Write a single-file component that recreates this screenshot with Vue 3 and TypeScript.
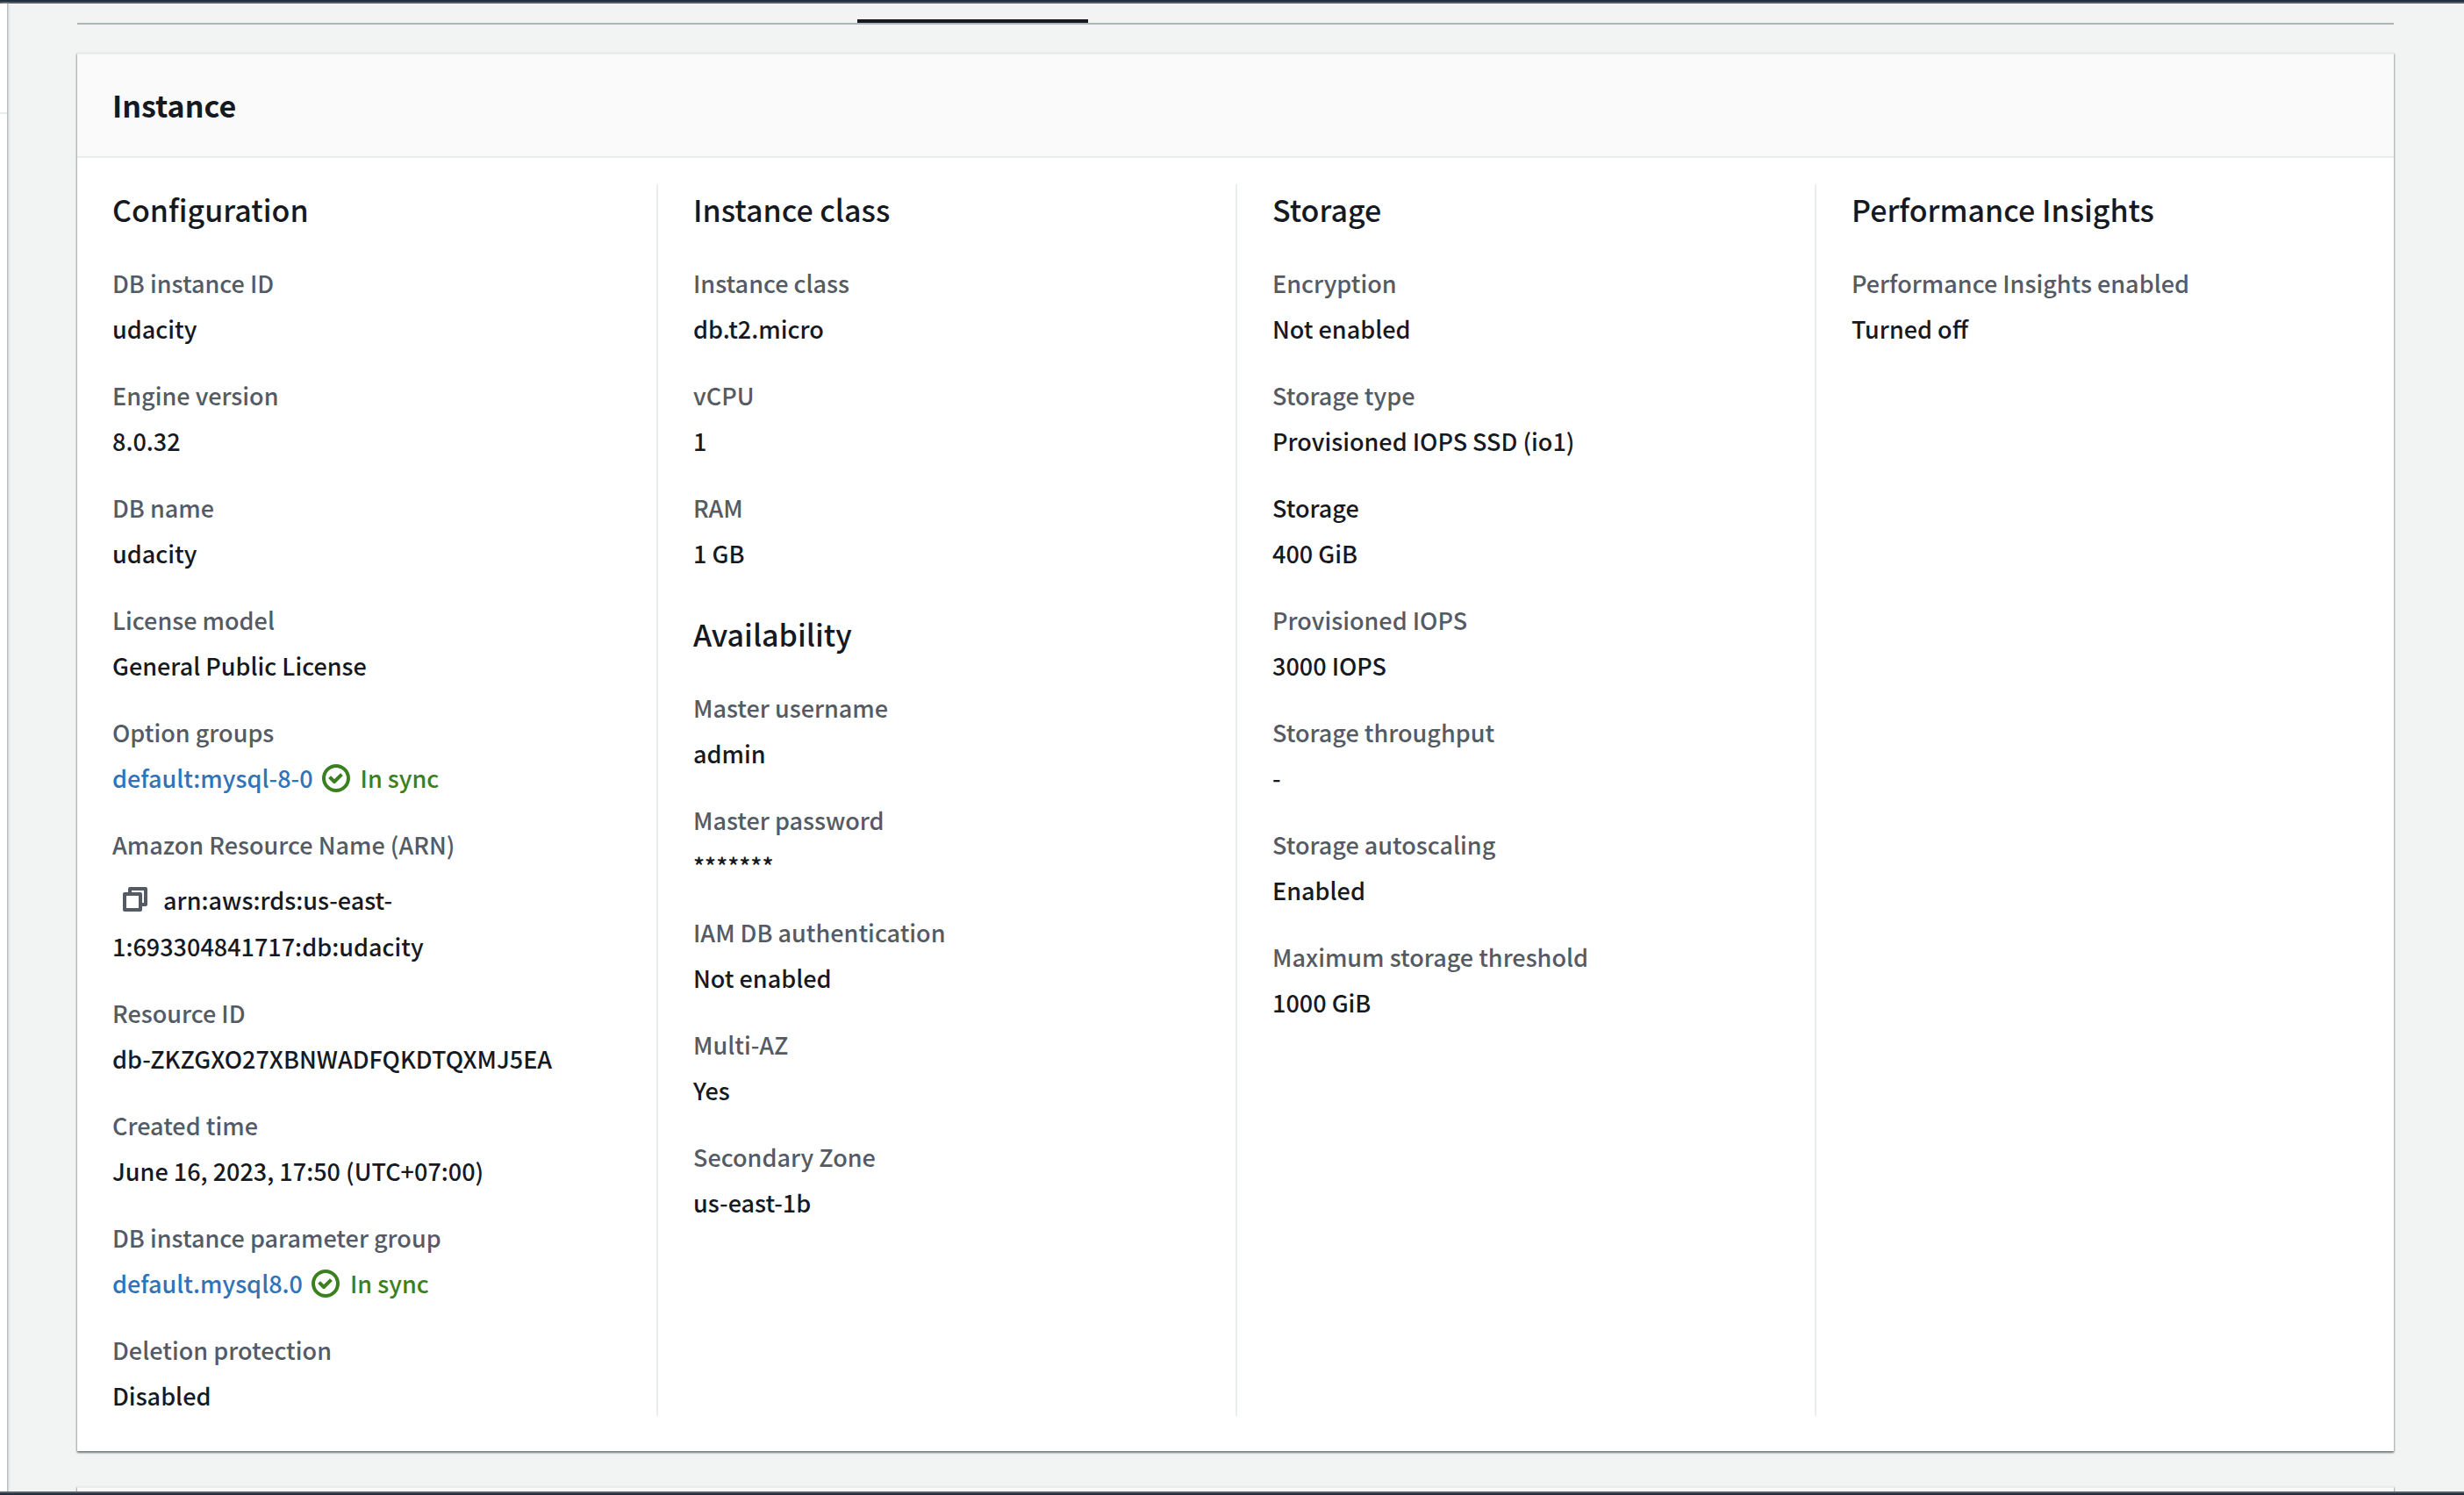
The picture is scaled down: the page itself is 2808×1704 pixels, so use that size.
<script setup lang="ts">
interface Field {
  label: string
  value: string
  kind?: 'link' | 'copy'
  strong?: boolean
}

interface Group {
  title: string
  fields: Field[]
}

const columns: Group[][] = [
  [
    {
      title: 'Configuration',
      fields: [
        { label: 'DB instance ID', value: 'udacity' },
        { label: 'Engine version', value: '8.0.32' },
        { label: 'DB name', value: 'udacity' },
        { label: 'License model', value: 'General Public License' },
        { label: 'Option groups', value: 'default:mysql-8-0', kind: 'link' },
        { label: 'Amazon Resource Name (ARN)', value: 'arn:aws:rds:us-east-1:693304841717:db:udacity', kind: 'copy' },
        { label: 'Resource ID', value: 'db-ZKZGXO27XBNWADFQKDTQXMJ5EA' },
        { label: 'Created time', value: 'June 16, 2023, 17:50 (UTC+07:00)' },
        { label: 'DB instance parameter group', value: 'default.mysql8.0', kind: 'link' },
        { label: 'Deletion protection', value: 'Disabled' },
      ],
    },
  ],
  [
    {
      title: 'Instance class',
      fields: [
        { label: 'Instance class', value: 'db.t2.micro' },
        { label: 'vCPU', value: '1' },
        { label: 'RAM', value: '1 GB' },
      ],
    },
    {
      title: 'Availability',
      fields: [
        { label: 'Master username', value: 'admin' },
        { label: 'Master password', value: '*******' },
        { label: 'IAM DB authentication', value: 'Not enabled' },
        { label: 'Multi-AZ', value: 'Yes' },
        { label: 'Secondary Zone', value: 'us-east-1b' },
      ],
    },
  ],
  [
    {
      title: 'Storage',
      fields: [
        { label: 'Encryption', value: 'Not enabled' },
        { label: 'Storage type', value: 'Provisioned IOPS SSD (io1)' },
        { label: 'Storage', value: '400 GiB', strong: true },
        { label: 'Provisioned IOPS', value: '3000 IOPS' },
        { label: 'Storage throughput', value: '-' },
        { label: 'Storage autoscaling', value: 'Enabled' },
        { label: 'Maximum storage threshold', value: '1000 GiB' },
      ],
    },
  ],
  [
    {
      title: 'Performance Insights',
      fields: [{ label: 'Performance Insights enabled', value: 'Turned off' }],
    },
  ],
]

function copy(text: string): void {
  void navigator.clipboard?.writeText(text)
}
</script>

<template>
  <div class="app">
    <div class="topbar"></div>
    <div class="body">
      <aside class="sidebar"><div class="sidebar-rule"></div></aside>
      <main class="content">
        <div class="tabs"><div class="tab-active"></div></div>

        <section class="card">
          <header class="card-header"><h2>Instance</h2></header>
          <div class="columns">
            <div v-for="(groups, i) in columns" :key="i" class="column">
              <section v-for="group in groups" :key="group.title" class="group">
                <h3>{{ group.title }}</h3>
                <dl>
                  <div v-for="field in group.fields" :key="field.label" class="field">
                    <dt :class="{ strong: field.strong }">{{ field.label }}</dt>
                    <dd v-if="field.kind === 'link'" class="linked">
                      <a href="#">{{ field.value }}</a>
                      <span class="status">
                        <svg class="icon" viewBox="0 0 16 16" aria-hidden="true">
                          <circle cx="8" cy="8" r="7" />
                          <path d="m5 8 2 2 3.521-3.521" stroke-linecap="square" />
                        </svg>
                        In sync
                      </span>
                    </dd>
                    <dd v-else-if="field.kind === 'copy'" class="arn">
                      <button type="button" aria-label="Copy ARN" @click="copy(field.value)">
                        <svg class="icon" viewBox="0 0 16 16" aria-hidden="true">
                          <path d="M2 5h9v9H2z" />
                          <path d="M5 5V2h9v9h-3" />
                        </svg>
                      </button>
                      {{ field.value }}
                    </dd>
                    <dd v-else>{{ field.value }}</dd>
                  </div>
                </dl>
              </section>
            </div>
          </div>
        </section>

        <section class="card next"></section>
      </main>
    </div>
    <div class="bottombar"></div>
  </div>
</template>

<style>
body {
  margin: 0;
  background: #f2f3f3;
}
</style>

<style scoped>
.app {
  display: flex;
  flex-direction: column;
  min-height: 100vh;
  box-sizing: border-box;
  background: #f2f3f3;
  color: #16191f;
  font-family: "Noto Sans CJK SC", "Noto Sans", sans-serif;
  font-size: 27px;
  font-weight: 500;
  line-height: 44px;
}

.topbar,
.bottombar {
  height: 2px;
  background: #232f3e;
}

.topbar {
  border-bottom: 2px solid #545b64;
}

.bottombar {
  border-top: 2px solid #545b64;
}

.body {
  display: flex;
  flex: 1;
}

.sidebar {
  flex: none;
  width: 8px;
  background: #fff;
  box-shadow: 1px 0 0 #b8c0c4, 2px 0 2px #c6cdd0;
}

.sidebar-rule {
  height: 2px;
  margin-top: 124px;
  background: #eaeded;
}

.content {
  display: flex;
  flex: 1;
  flex-direction: column;
  min-width: 0;
  margin: 0 80px;
}

.tabs {
  padding-top: 18px;
  margin-bottom: 32px;
  border-bottom: 2px solid #aab7b8;
}

.tab-active {
  width: 263px;
  height: 4px;
  margin-left: 889px;
  background: #16191f;
}

.card {
  background: #fff;
  border-top: 2px solid #eaeded;
  box-shadow: 0 2px 2px rgba(0, 28, 36, 0.4), 1px 1px 2px rgba(0, 28, 36, 0.2), -1px 1px 2px rgba(0, 28, 36, 0.2);
}

.next {
  flex: 1;
  min-height: 4px;
  margin-top: 40px;
  background: #fafafa;
}

.card-header {
  padding: 36px 40px;
  background: #fafafa;
  border-bottom: 2px solid #eaeded;
}

h2,
h3 {
  margin: 0;
  font-size: 34px;
  line-height: 44px;
}

h2 {
  font-weight: 700;
}

h3 {
  margin-bottom: 40px;
  font-weight: 500;
}

.columns {
  display: grid;
  grid-template-columns: repeat(4, 1fr);
  padding: 30px 0 40px;
}

.column {
  min-width: 0;
  padding: 7px 40px 1px;
}

.column + .column {
  border-left: 2px solid #eaeded;
}

.group + .group {
  margin-top: 48px;
}

dl {
  display: flex;
  flex-direction: column;
  gap: 32px;
  margin: 0;
}

dt {
  margin-bottom: 8px;
  color: #545b64;
}

dt.strong {
  color: #16191f;
}

dd {
  margin: 0;
}

a {
  color: #3073b8;
  text-decoration: none;
}

.linked,
.status {
  display: flex;
  align-items: center;
}

.linked {
  gap: 10px;
}

.status {
  gap: 12px;
  color: #3b8020;
}

.icon {
  display: block;
  flex: none;
  width: 32px;
  height: 32px;
  fill: none;
  stroke: currentColor;
  stroke-width: 2;
  stroke-linejoin: round;
}

.arn button {
  display: inline-flex;
  align-items: center;
  height: 64px;
  padding: 0 10px;
  border: 0;
  background: none;
  color: #545b64;
  vertical-align: -4px;
  cursor: pointer;
}
</style>
